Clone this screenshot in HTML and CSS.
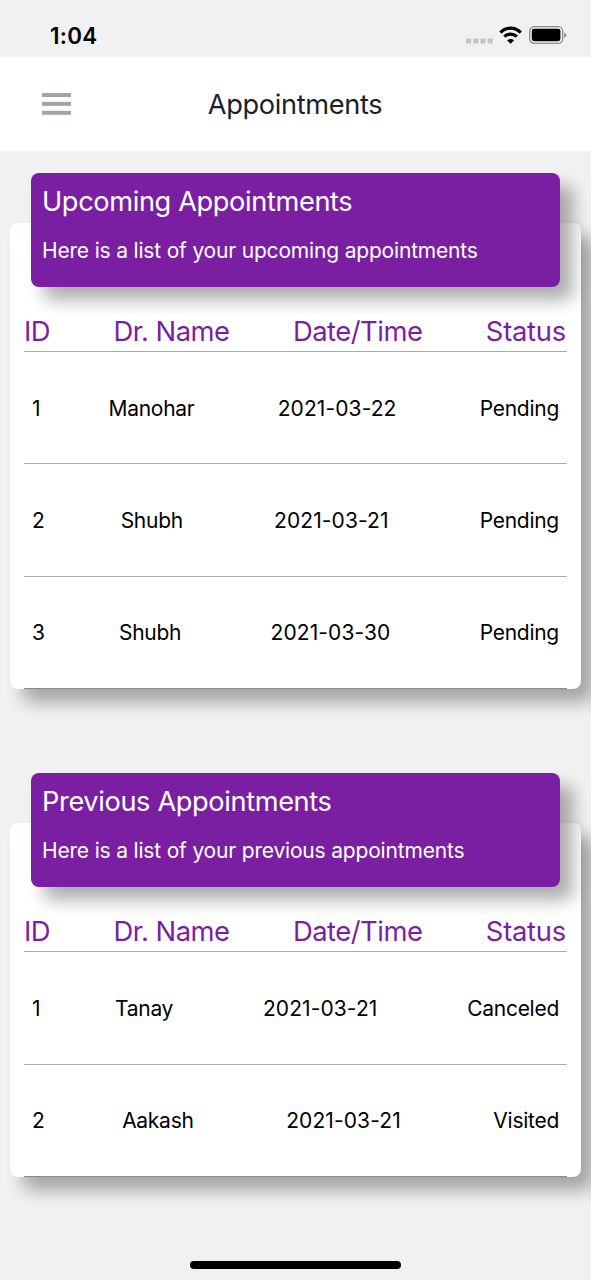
FILE: index.html
```html
<!DOCTYPE html>
<html lang="en">
<head>
<meta charset="utf-8">
<title>Appointments</title>
<link rel="stylesheet" href="styles.css">
</head>
<body>
<header class="status-bar">
  <span class="clock">1:04</span>
  <div class="indicators">
    <svg class="signal" width="28" height="6" viewBox="0 0 28 6" fill="#c4c4c4"><rect x="0" y="0.4" width="5.2" height="5.2" rx="1"/><rect x="7.2" y="0.4" width="5.2" height="5.2" rx="1"/><rect x="14.4" y="0.4" width="5.2" height="5.2" rx="1"/><rect x="21.6" y="0.4" width="5.2" height="5.2" rx="1"/></svg>
    <svg class="wifi" width="24" height="18" viewBox="0 0 24 18"><g fill="none" stroke="#000" stroke-width="3.3"><path d="M1.4 6.6Q6 2.2 11.6 2.2T21.8 6.6"/><path d="M5.3 10.6Q8.2 8.2 11.6 8.2T17.9 10.6"/></g><path d="M8 14.2Q11.6 11.6 15.2 14.2L11.6 17.8Z"/></svg>
    <svg class="battery" width="39" height="18" viewBox="0 0 39 18"><rect x="0.7" y="0.7" width="33" height="16.6" rx="4.6" fill="none" stroke="#8c8c8c" stroke-width="1.3"/><rect x="2.8" y="2.8" width="28.6" height="12.4" rx="2.4"/><path d="M35.2 6.4Q37.4 7 37.4 9T35.2 11.6Z" fill="#8c8c8c"/></svg>
  </div>
</header>
<nav class="nav-bar">
  <svg class="menu" width="29" height="22" viewBox="0 0 29 22" fill="#9fa5aa"><rect width="29" height="4"/><rect y="8.9" width="29" height="4"/><rect y="17.8" width="29" height="4"/></svg>
  <h1 class="title">Appointments</h1>
</nav>
<main class="content">
  <section class="card">
    <div class="banner">
      <h2 class="banner-title">Upcoming Appointments</h2>
      <p class="banner-text">Here is a list of your upcoming appointments</p>
    </div>
    <div class="table">
      <div class="row head"><span>ID</span><span>Dr. Name</span><span>Date/Time</span><span>Status</span></div>
      <div class="row"><span class="id">1</span><span>Manohar</span><span class="date">2021-03-22</span><span>Pending</span></div>
      <div class="row"><span class="id">2</span><span>Shubh</span><span class="date">2021-03-21</span><span>Pending</span></div>
      <div class="row"><span class="id">3</span><span>Shubh</span><span class="date">2021-03-30</span><span>Pending</span></div>
    </div>
  </section>
  <section class="card">
    <div class="banner">
      <h2 class="banner-title">Previous Appointments</h2>
      <p class="banner-text">Here is a list of your previous appointments</p>
    </div>
    <div class="table">
      <div class="row head"><span>ID</span><span>Dr. Name</span><span>Date/Time</span><span>Status</span></div>
      <div class="row"><span class="id">1</span><span>Tanay</span><span class="date">2021-03-21</span><span>Canceled</span></div>
      <div class="row"><span class="id">2</span><span>Aakash</span><span class="date">2021-03-21</span><span>Visited</span></div>
    </div>
  </section>
</main>
<footer class="home-area"><div class="home-indicator"></div></footer>
</body>
</html>
```
FILE: styles.css
```css
* { box-sizing: border-box; }
body {
  margin: 0;
  height: 1280px;
  display: flex;
  flex-direction: column;
  overflow: hidden;
  background: #f1f1f1;
  color: #000;
  font-family: Inter, "Liberation Sans", sans-serif;
}
svg { display: block; flex: none; }
h1, h2, p { margin: 0; font-weight: 400; white-space: nowrap; }
.status-bar {
  height: 57px;
  flex: none;
  display: flex;
  justify-content: space-between;
  padding: 21px 23px 0 50px;
}
.clock { font-size: 22.4px; line-height: 30px; font-weight: 600; letter-spacing: 0.3px; }
.indicators { display: flex; align-items: flex-start; padding-top: 5px; }
.signal { margin: 12px 5px 0 0; }
.wifi { margin-right: 6px; }
.nav-bar {
  height: 94px;
  flex: none;
  display: grid;
  grid-template-columns: 1fr auto 1fr;
  align-items: center;
  padding: 0 43px 0 42px;
  background: #fff;
}
.title { font-size: 27.2px; line-height: 34px; letter-spacing: -0.35px; padding-top: 1px; color: #1c1e2b; }
.content { flex: 1; padding: 72px 10px 0; display: flex; flex-direction: column; gap: 134px; }
.card {
  flex: none;
  background: #fff;
  border-radius: 8px;
  padding: 0 14px;
  box-shadow: 13px 13px 17px rgba(0, 0, 0, 0.32);
}
.banner {
  height: 114px;
  margin: 0 7px -50px;
  padding: 11px;
  border-radius: 8px;
  background: #7b1fa2;
  color: #fff;
  box-shadow: 13px 13px 17px rgba(0, 0, 0, 0.32);
  transform: translateY(-50px);
}
.banner-title { font-size: 27.2px; line-height: 36px; letter-spacing: -0.37px; }
.banner-text { font-size: 21px; line-height: 28px; margin-top: 17px; letter-spacing: -0.18px; }
.row {
  height: 112.4px;
  display: flex;
  justify-content: space-between;
  align-items: center;
  padding: 2px 8px 0;
  border-bottom: 1px solid #aaa;
  font-size: 21px;
  line-height: 28px;
  letter-spacing: -0.27px;
}
.date { letter-spacing: 0.1px; }
.head {
  height: 65px;
  padding: 23px 1px 0 0;
  font-size: 27.4px;
  line-height: 36px;
  letter-spacing: -0.5px;
  color: #7b1fa2;
}
.head span:last-child { letter-spacing: -0.25px; }
.id { margin-right: -15px; }
.row:last-child { border-color: #8c8c8c; }
.home-area { height: 20px; flex: none; display: flex; justify-content: center; }
.home-indicator { width: 211px; height: 8px; margin-top: 1px; border-radius: 4px; background: #000; }
```
